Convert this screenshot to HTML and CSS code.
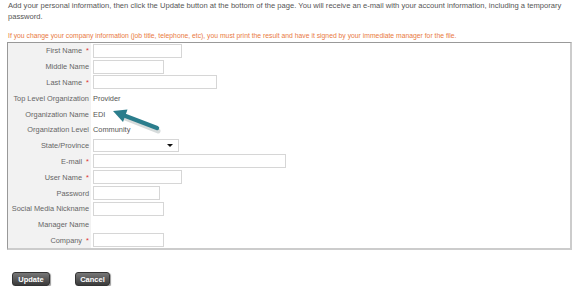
FILE: index.html
```html
<!DOCTYPE html>
<html lang="en">
<head>
    <meta charset="UTF-8">
    <title>Profile</title>
    <link rel="stylesheet" href="styles.css">
</head>
<body>
<div class="page">
    <p class="intro">Add your personal information, then click the Update button at the bottom of the page. You will receive an e-mail with your account information, including a temporary password.</p>
    <p class="warn">If you change your company information (job title, telephone, etc), you must print the result and have it signed by your immediate manager for the file.</p>

    <div class="form-box">
        <table class="form">
            <tr><td class="lbl">First Name <span class="req">*</span></td><td><input type="text" class="w89"></td></tr>
            <tr><td class="lbl">Middle Name</td><td><input type="text" class="w71"></td></tr>
            <tr><td class="lbl">Last Name <span class="req">*</span></td><td><input type="text" class="w124"></td></tr>
            <tr><td class="lbl">Top Level Organization</td><td class="val">Provider</td></tr>
            <tr><td class="lbl">Organization Name</td><td class="val">EDI</td></tr>
            <tr><td class="lbl">Organization Level</td><td class="val">Community</td></tr>
            <tr><td class="lbl">State/Province</td><td><div class="select"><span class="caret"></span></div></td></tr>
            <tr><td class="lbl">E-mail <span class="req">*</span></td><td><input type="text" class="w193"></td></tr>
            <tr><td class="lbl">User Name <span class="req">*</span></td><td><input type="text" class="w89"></td></tr>
            <tr><td class="lbl">Password</td><td><input type="text" class="w67"></td></tr>
            <tr><td class="lbl">Social Media Nickname</td><td><input type="text" class="w71"></td></tr>
            <tr><td class="lbl">Manager Name</td><td></td></tr>
            <tr><td class="lbl">Company <span class="req">*</span></td><td><input type="text" class="w71"></td></tr>
        </table>

        <!-- callout arrow -->
        <svg class="arrow" width="56" height="32" viewBox="0 0 56 32">
            <path d="M17 14 L50 27" stroke="#7a8a8c" stroke-width="5" opacity="0.3" stroke-linecap="round"/>
            <path d="M15 11 L49 24" stroke="#2b7d8c" stroke-width="4.5" stroke-linecap="round"/>
            <path d="M5 7 L19.5 5.5 L15 18 Z" fill="#2b7d8c"/>
        </svg>
    </div>

    <div class="btns">
        <button class="btn">Update</button>
        <button class="btn">Cancel</button>
    </div>
</div>
</body>
</html>
```

FILE: styles.css
```css
body {
    margin: 0;
    background: #fff;
    font-family: "Liberation Sans", Arial, sans-serif;
    font-size: 7.4px;
    color: #555;
}
.page {
    padding: 0 4px 0 8px;
}
.intro {
    margin: 0;
    font-size: 7.6px;
    line-height: 11px;
}
.warn {
    margin: 8px 0 0;
    color: #e97a3f;
    font-size: 6.8px;
    line-height: 11px;
}
.form-box {
    position: relative;
    margin: 1px 0 0 -1px;
    width: 562px;
    border-top: 1px solid #999;
    border-left: 1px solid #999;
    border-right: 2px solid #ccc;
    border-bottom: 2px solid #ccc;
}
.form {
    border-collapse: collapse;
    width: 100%;
}
.form td {
    padding: 0;
    height: 15.8px;
    vertical-align: middle;
}
.form .lbl {
    width: 81px;
    padding-right: 2px;
    text-align: right;
    background: #f2f2f2;
    color: #666;
    white-space: nowrap;
}
.form td + td {
    padding-left: 2px;
}
.req {
    color: #e03030;
    margin-left: 2px;
}
.val {
    color: #555;
}
.form input {
    display: block;
    box-sizing: border-box;
    height: 14px;
    margin: 0;
    border: 1px solid #d6d6d6;
    background: #fff;
}
.w89 { width: 89px; }
.w71 { width: 71px; }
.w124 { width: 124px; }
.w193 { width: 193px; }
.w67 { width: 67px; }
.select {
    position: relative;
    box-sizing: border-box;
    width: 86px;
    height: 13px;
    border: 1px solid #d6d6d6;
}
.caret {
    position: absolute;
    right: 5px;
    top: 4px;
    border-left: 3px solid transparent;
    border-right: 3px solid transparent;
    border-top: 3px solid #111;
}
.arrow {
    position: absolute;
    left: 100px;
    top: 61px;
}
.btns {
    display: flex;
    gap: 25px;
    padding: 22px 0 0 4px;
}
.btn {
    width: 38px;
    height: 14px;
    padding: 0;
    border: 1px solid #333;
    border-radius: 3px;
    background: linear-gradient(#777, #3a3a3a);
    color: #fff;
    font-family: "Liberation Sans", Arial, sans-serif;
    font-size: 7.5px;
    font-weight: bold;
    box-shadow: 1px 1px 1px #999;
}
.btn + .btn {
    width: 35px;
}
```
